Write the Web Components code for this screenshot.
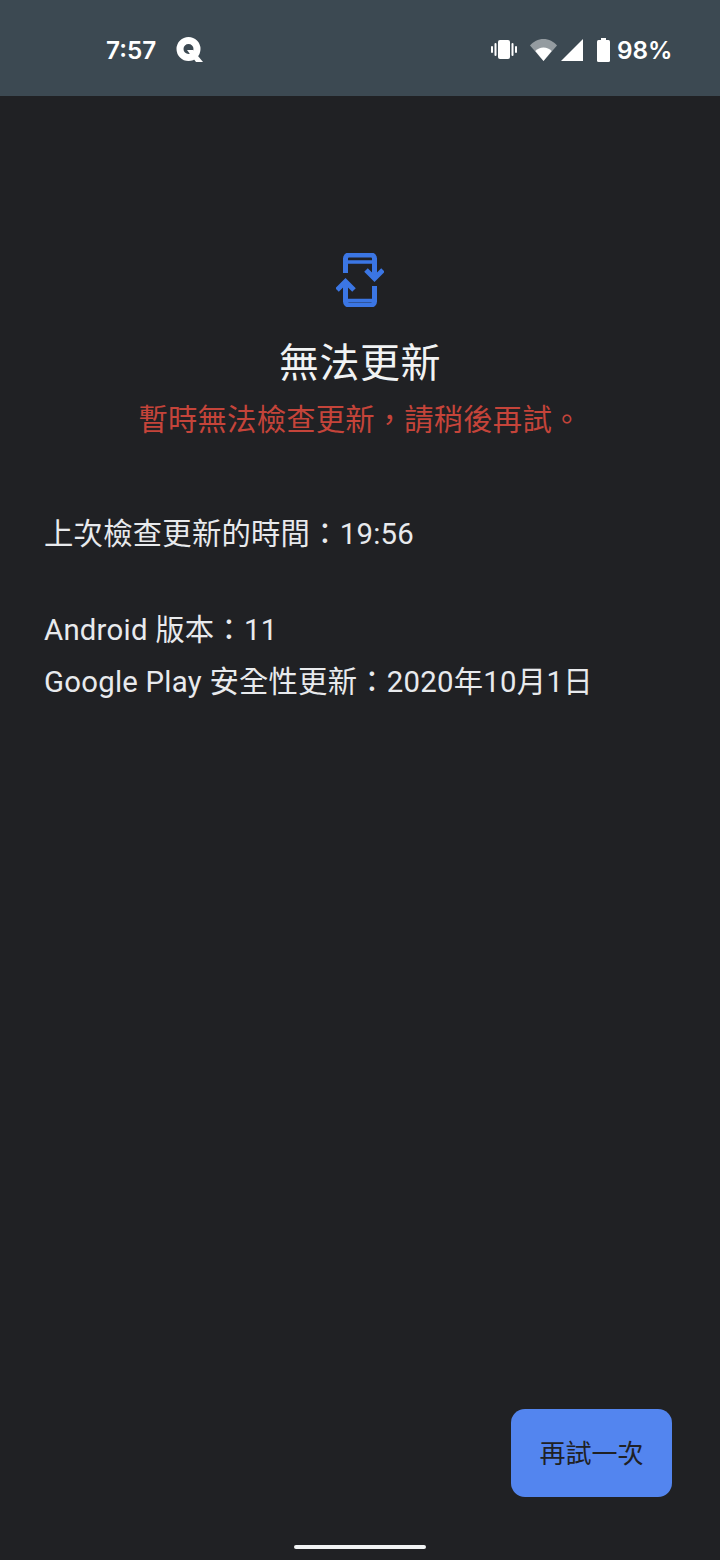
<!DOCTYPE html>
<html lang="zh-Hant">
<head>
<meta charset="utf-8">
<title>無法更新</title>
<style>
  html, body { margin: 0; padding: 0; background: #202124; }
  body { font-family: Roboto, "Noto Sans CJK TC", sans-serif; }
</style>
</head>
<body>
<update-screen>
  <status-bar slot="status"></status-bar>
  <update-header slot="header" title-text="無法更新" message="暫時無法檢查更新，請稍後再試。"></update-header>
  <info-block slot="info">
    <p class="x">上次檢查更新的時間：19:56</p>
  </info-block>
  <info-block slot="info">
    <p class="x">Android 版本：11</p>
    <p class="x">Google Play 安全性更新：2020年10月1日</p>
  </info-block>
  <retry-button slot="action">再試一次</retry-button>
</update-screen>

<script>
class StatusBar extends HTMLElement {
  connectedCallback() {
    this.attachShadow({ mode: 'open' });
    this.shadowRoot.innerHTML = `
      <style>
        :host {
          display: flex;
          align-items: center;
          height: 96px;
          padding: 3px 47.500px 0 106px;
          box-sizing: border-box;
          background: #3c4952;
          color: #fff;
          font: 600 24.300px Inter, "Open Sans", sans-serif;
        }
        .left, .right { display: flex; align-items: center; }
        .spacer { flex: 1; }
        svg { display: block; }
        .q { margin-left: 20px; }
        .vib { margin-right: 13px; }
        .wifi { margin-right: 4px; }
        .sig { margin-right: 14px; }
        .bat { margin-right: 7px; }
      </style>
      <div class="left">
        <span>7:57</span>
        <svg class="q" width="28" height="26" viewBox="0 0 28 26">
          <circle cx="12.5" cy="12" r="8.500" fill="none" stroke="#fff" stroke-width="7"/>
          <path d="M11 13h6l10 12h-7z" fill="#fff"/>
        </svg>
      </div>
      <div class="spacer"></div>
      <div class="right">
        <svg class="vib" width="26" height="19" viewBox="0 0 26 19" fill="#fff">
          <rect x="7" y="0" width="12" height="19" rx="2"/>
          <rect x="3.500" y="3" width="2" height="13" rx="1"/>
          <rect x="20.500" y="3" width="2" height="13" rx="1"/>
          <rect x="0" y="6" width="2" height="7" rx="1"/>
          <rect x="24" y="6" width="2" height="7" rx="1"/>
        </svg>
        <svg class="wifi" width="27" height="22" viewBox="0 0 27 22">
          <path d="M0 6.500C3.500 2.500 8 0 13.500 0S23.500 2.500 27 6.500L13.500 22z" fill="#fff" fill-opacity=".45"/>
          <path d="M5.300 12C7.500 9.800 10.300 8.500 13.500 8.500s6 1.300 8.200 3.500L13.500 22z" fill="#fff"/>
        </svg>
        <svg class="sig" width="22" height="22" viewBox="0 0 22 22">
          <path d="M22 0V22H0z" fill="#fff"/>
        </svg>
        <svg class="bat" width="13" height="24" viewBox="0 0 13 24" fill="#fff">
          <rect x="4" y="0" width="5" height="3"/>
          <rect x="0" y="2" width="13" height="22" rx="1.500"/>
        </svg>
        <span>98%</span>
      </div>
    `;
  }
}

class UpdateHeader extends HTMLElement {
  connectedCallback() {
    this.attachShadow({ mode: 'open' });
    this.shadowRoot.innerHTML = `
      <style>
        :host {
          display: flex;
          flex-direction: column;
          align-items: center;
          padding-top: 157px;
        }
        svg { display: block; }
        h1 {
          margin: 33px 0 0;
          font-size: 40px;
          line-height: 48px;
          font-weight: 400;
          letter-spacing: .5px;
          color: #f1f3f4;
        }
        p {
          margin: 12px 0 0;
          font-size: 29.33px;
          line-height: 40px;
          letter-spacing: .2px;
          color: #c5443a;
        }
      </style>
      <svg width="48" height="54" viewBox="0 0 48 54" fill="none" stroke="#3b76e4" stroke-width="5">
        <path d="M9.500 20V5.500a3.500 3.500 0 0 1 3.500-3.500h22a3.500 3.500 0 0 1 3.500 3.500V25"/>
        <path d="M9.500 9h29" stroke-width="3.500"/>
        <path d="M38.500 33v15.500a3.500 3.500 0 0 1-3.500 3.500H13a3.500 3.500 0 0 1-3.500-3.500V29"/>
        <path d="M9.500 47.500h29" stroke-width="3.500"/>
        <path d="M30 17l8.500 8.500L47 17"/>
        <path d="M1 37l8.500-8.500L18 37"/>
      </svg>
      <h1>${this.getAttribute('title-text')}</h1>
      <p>${this.getAttribute('message')}</p>
    `;
  }
}

class InfoBlock extends HTMLElement {
  connectedCallback() {
    this.attachShadow({ mode: 'open' });
    this.shadowRoot.innerHTML = `
      <style>
        :host {
          display: block;
          font-size: 29.33px;
          line-height: 52px;
          letter-spacing: .25px;
          color: #e8eaed;
        }
        ::slotted(p) { margin: 0; white-space: nowrap; }
      </style>
      <slot></slot>
    `;
  }
}

class RetryButton extends HTMLElement {
  connectedCallback() {
    this.attachShadow({ mode: 'open' });
    this.shadowRoot.innerHTML = `
      <style>
        :host {
          display: flex;
          align-items: center;
          justify-content: center;
          width: 161px;
          height: 88px;
          padding-bottom: 3px;
          box-sizing: border-box;
          border-radius: 14px;
          background: #5385ef;
          color: #202124;
          font-size: 26px;
        }
      </style>
      <slot></slot>
    `;
  }
}

class UpdateScreen extends HTMLElement {
  connectedCallback() {
    this.attachShadow({ mode: 'open' });
    this.shadowRoot.innerHTML = `
      <style>
        :host {
          display: flex;
          flex-direction: column;
          width: 720px;
          height: 1560px;
          overflow: hidden;
          background: #202124;
        }
        .info {
          display: flex;
          flex-direction: column;
          gap: 44px;
          padding: 68px 44px 0;
        }
        .fill { flex: 1; }
        .action {
          display: flex;
          justify-content: flex-end;
          padding-right: 48px;
        }
        .nav {
          display: flex;
          justify-content: center;
          padding: 48px 0 11px;
        }
        .pill {
          width: 132px;
          height: 4px;
          border-radius: 2px;
          background: #f1f3f4;
        }
      </style>
      <slot name="status"></slot>
      <slot name="header"></slot>
      <div class="info"><slot name="info"></slot></div>
      <div class="fill"></div>
      <div class="action"><slot name="action"></slot></div>
      <div class="nav"><div class="pill"></div></div>
    `;
  }
}

customElements.define('status-bar', StatusBar);
customElements.define('update-header', UpdateHeader);
customElements.define('info-block', InfoBlock);
customElements.define('retry-button', RetryButton);
customElements.define('update-screen', UpdateScreen);
</script>
</body>
</html>
